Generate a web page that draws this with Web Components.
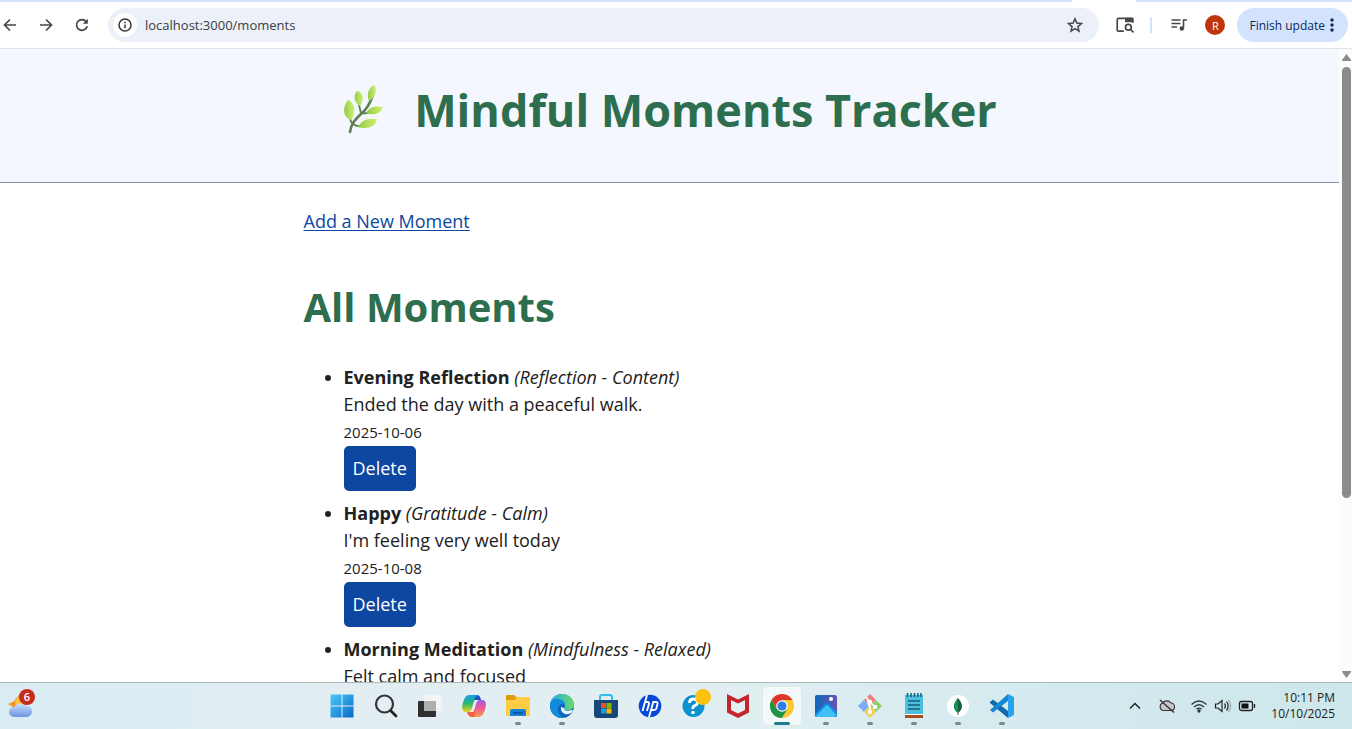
<!DOCTYPE html>
<html lang="en">
<head>
<meta charset="utf-8">
<meta name="viewport" content="width=device-width, initial-scale=1">
<title>Mindful Moments Tracker</title>
<style>
html, body { margin: 0; height: 100%; }
body { font-family: "Open Sans", "Noto Sans", sans-serif; color: #212121; overflow: hidden; }
</style>
</head>
<body>
<desktop-screen>
  <browser-toolbar slot="toolbar" url="localhost:3000/moments"></browser-toolbar>
  <moments-page slot="page"></moments-page>
  <task-bar slot="taskbar"></task-bar>
</desktop-screen>

<script>
const ICONS = {
  back: `<svg viewBox="0 0 16 16" fill="none" stroke="#474747" stroke-width="1.7"><path d="M14 8H3M8 2.5 2.5 8 8 13.5"/></svg>`,
  forward: `<svg viewBox="0 0 16 16" fill="none" stroke="#474747" stroke-width="1.7"><path d="M2 8h11M8 2.5 13.5 8 8 13.5"/></svg>`,
  reload: `<svg viewBox="0 0 16 16" fill="none" stroke="#474747" stroke-width="1.7"><path d="M13.2 9.2A5.4 5.4 0 1 1 12.2 4.6"/><path d="M13.8 1.8v5H8.8L13.8 1.8Z" fill="#474747" stroke="none"/></svg>`,
  info: `<svg viewBox="0 0 16 16" fill="none" stroke="#333" stroke-width="1.5"><circle cx="8" cy="8" r="6"/><path d="M8 7.4v3.8M8 4.7v1.5"/></svg>`,
  star: `<svg viewBox="0 0 18 18" fill="none" stroke="#474747" stroke-width="1.5"><path d="m9 2.8 1.8 4.3 4.7.4-3.6 3.1 1.1 4.6L9 12.7l-4 2.5 1.1-4.6-3.6-3.1 4.7-.4Z"/></svg>`,
  lens: `<svg viewBox="0 0 20 18" fill="none" stroke="#474747" stroke-width="1.5"><path d="M9 14.500H4q-1 0-1-1V4q0-1 1-1h12q1 0 1 1v3"/><path d="M10 2.500h7.500V6.500H10Z" fill="#474747" stroke="none"/><circle cx="13" cy="11" r="2.600"/><path d="m15 13 2.600 2.600"/></svg>`,
  media: `<svg viewBox="0 0 18 18" fill="none" stroke="#474747" stroke-width="1.6"><path d="M1.500 4h9M1.500 7.500h9M1.500 11h5.500"/><path d="M13.500 12.500V4h3.500"/><circle cx="11.800" cy="12.500" r="2.200" fill="#474747" stroke="none"/></svg>`,
  dots: `<svg viewBox="0 0 6 16" fill="#0b2a5c"><circle cx="3" cy="3" r="1.700"/><circle cx="3" cy="8" r="1.700"/><circle cx="3" cy="13" r="1.700"/></svg>`,
  herb: `<svg viewBox="0 0 44 50"><defs><linearGradient id="l" x1="0" x2="1"><stop stop-color="#8fca4b"/><stop offset=".6" stop-color="#b9e35f"/><stop offset="1" stop-color="#cdee7c"/></linearGradient></defs><g fill="none" stroke="#5d8052" stroke-linecap="round"><path d="M8 47C9 38 14 34 20 28 27 22 29 15 31 10" stroke-width="2.600"/><path d="M10 38Q8 36 8 32M19 28Q18 24 17 20M20 28Q27 29 31 26M11 39Q16 43 24 40" stroke-width="1.800"/></g><g fill="url(#l)"><path d="M6 15C10 16 14 23 12 27Q12 33 8 35C1 31 0 23 6 15Z"/><path d="M15 6C21 7 23 14 18 21 12 17 11 11 15 6Z"/><path d="M32 0C36 5 33 13 27 16 24 9 27 3 32 0Z"/><path d="M41 22C39 29 31 31 24 28 28 21 34 21 41 22Z"/><path d="M35 34C34 42 24 45 16 42 21 33 27 34 35 34Z"/></g></svg>`,
  weather: `<svg viewBox="0 0 26 26"><defs><linearGradient id="w" x2="0" y2="1"><stop stop-color="#c9ddfc"/><stop offset="1" stop-color="#6c95df"/></linearGradient></defs><path d="m12 1 2 5 6 1-3 7-9 3-3-3-5-3 5-2Z" fill="#f7941d"/><circle cx="12" cy="9" r="5" fill="#ffc33b"/><path d="M6 24a5 5 0 0 1 0-10 7 6 0 0 1 12-1 5.500 5.500 0 0 1 1 11Z" fill="url(#w)"/></svg>`,
  windows: `<svg viewBox="0 0 24 24"><defs><linearGradient id="g" x2="1" y2="1"><stop stop-color="#4ccbf9"/><stop offset="1" stop-color="#0469c9"/></linearGradient></defs><path fill="url(#g)" d="M.5.5h11v11H.5ZM12.500.5h11v11h-11ZM.5 12.500h11v11H.5ZM12.500 12.500h11v11h-11Z"/></svg>`,
  search: `<svg viewBox="0 0 24 24" fill="none"><circle cx="10.500" cy="10" r="8.500" stroke="#303438" stroke-width="2.200" fill="#e5eff2"/><path d="m17 17 5 5" stroke="#252525" stroke-width="2.800" stroke-linecap="round"/></svg>`,
  tasks: `<svg viewBox="0 0 24 24"><rect y="7" width="18" height="16" rx="1" fill="#303030"/><rect x="6" y="1" width="18" height="16" rx="1" fill="#f4f4f4"/><path d="M6 7h12v10H6Z" fill="#aeb0b0"/></svg>`,
  copilot: `<svg viewBox="0 0 24 24"><defs><linearGradient id="a" x2="0" y2="1"><stop stop-color="#149eea"/><stop offset=".5" stop-color="#29b96e"/><stop offset="1" stop-color="#f6d01c"/></linearGradient><linearGradient id="b" x2="0" y2="1"><stop stop-color="#a754e5"/><stop offset=".5" stop-color="#ee5e91"/><stop offset="1" stop-color="#fc9b4a"/></linearGradient></defs><path d="M12 1h3q3 0 4 5h-6l-3 3Z" fill="#2251c7"/><path d="M7 1h9q-3 1-4 6l-2 7q-1 4-4 4H4q-4 0-4-5Q2 1 7 1Z" fill="url(#a)"/><path d="M17 23H8q3-1 4-6l2-7q1-4 4-4h2q4 0 4 5-2 12-7 12Z" fill="url(#b)"/><path d="M12 23H9q-3-1-4-5h6l3-3Z" fill="#ef6046"/></svg>`,
  folder: `<svg viewBox="0 0 24 24"><path d="M0 2q0-1 1-1h7l2 2h13q1 0 1 1v17H0Z" fill="#dd9d06"/><path d="M0 6h9l2-3h12q1 0 1 1v18H0Z" fill="#ffcd43"/><path d="M4 22v-5q0-2 2-2h12q2 0 2 2v5Z" fill="#1780d6"/><path d="M7 18h10v2H7Z" fill="#0558a2"/></svg>`,
  edge: `<svg viewBox="0 0 24 24"><defs><linearGradient id="e" x2="1"><stop stop-color="#25a9ed"/><stop offset="1" stop-color="#69dc65"/></linearGradient></defs><circle cx="12" cy="12" r="12" fill="#0b67bd"/><path d="M0 11C1-3 23-4 24 11q0 5-6 5-4 0-4-2 2-2 0-5-5-6-14 2Z" fill="url(#e)"/><path d="M0 10q2-6 9-5 7 2 6 7-1-3-4-2-4 2-3 7 1 5 6 7Q0 24 0 10Z" fill="#128bdc"/><path d="M14 14q0 4 8 2l1 1q-3 4-8 3-5-2-4-7Z" fill="#e7f4f7"/></svg>`,
  store: `<svg viewBox="0 0 24 24"><path d="M6 7V3q0-2 2-2h8q2 0 2 2v4" fill="none" stroke="#32bdf2" stroke-width="2"/><path d="M0 6h24v15q0 3-3 3H3q-3 0-3-3Z" fill="#194779"/><path d="M7 9h5v5H7Z" fill="#f25022"/><path d="M12.500 9h5v5h-5Z" fill="#7fba00"/><path d="M7 14.500h5v5H7Z" fill="#00a4ef"/><path d="M12.500 14.500h5v5h-5Z" fill="#ffb900"/></svg>`,
  hp: `<svg viewBox="0 0 24 24"><circle cx="12" cy="12" r="11.300" fill="#0648d8"/><g fill="none" stroke="#fff" stroke-width="1.900"><path d="M9 1 4.500 17M7 8h2.500q2 0 1.400 2L9 17M11 23l4.300-15H18q2 0 1.500 2l-1.200 4.500Q17.800 16 16 16h-3"/></g></svg>`,
  help: `<svg viewBox="0 0 28 28"><circle cx="13.500" cy="14" r="11" fill="#0b92d1"/><path d="M9.500 11q0-4 4-4t4 3.500q0 2-2.500 3T13 17" fill="none" stroke="#fff" stroke-width="2.800"/><circle cx="13" cy="20.500" r="1.800" fill="#fff"/><circle cx="23" cy="5" r="8" fill="#ffc20e"/></svg>`,
  mcafee: `<svg viewBox="0 0 24 24"><path d="m1 0 11 5.500L23 0v18.500L12 24 1 18.500Z" fill="#c6252c"/><path d="m5 6 7 3.500L19 6v10l-7 3.500L5 16Z" fill="#e4f0f3"/></svg>`,
  chrome: `<svg viewBox="0 0 24 24"><circle cx="12" cy="12" r="12" fill="#fdc82f"/><path d="M1.600 6A12 12 0 0 1 22.400 6H12L7 15Z" fill="#dc382c"/><path d="M1.600 6A12 12 0 0 0 12 24l5.200-9H6.800Z" fill="#209348"/><circle cx="12" cy="12" r="5.800" fill="#fff"/><circle cx="12" cy="12" r="4.600" fill="#2f7de9"/></svg>`,
  photos: `<svg viewBox="0 0 24 24"><defs><linearGradient id="p" x2="1"><stop stop-color="#0c67bc"/><stop offset="1" stop-color="#6556b4"/></linearGradient></defs><rect x="1" y="1" width="22" height="22" rx="2" fill="url(#p)"/><path d="M1 20 11.500 9.500q1.500-1 3 0L23 18v3q0 2-2 2H3q-2 0-2-2Z" fill="#1687df"/><path d="m2 22 9.500-10q1.500-1 3 0l7.500 8.500Q22 23 20 23H3Z" fill="#40bff5"/><circle cx="17" cy="5" r="2" fill="#fff"/></svg>`,
  git: `<svg viewBox="0 0 24 24"><path d="m12 0 6 6-6 6-6-6Z" fill="#f28080"/><path d="m6 6 6 6-6 6-6-6Z" fill="#79aff8"/><path d="m18 6 6 6-6 6-6-6Z" fill="#8bd165"/><path d="m12 12 6 6-6 6-6-6Z" fill="#f5ce4d"/><g fill="#fff" stroke="#fff" stroke-width="1.500"><path d="m8 3 4 5v10M12 8l5 5"/><circle cx="12" cy="8" r="1.500"/><circle cx="12" cy="18" r="1.500"/><circle cx="17" cy="13" r="1.500"/></g></svg>`,
  notes: `<svg viewBox="0 0 24 26"><path d="M3 2h18v20H3Z" fill="#4cbfdd"/><path d="M3 22h18v3H3Z" fill="#a84d17"/><path d="M3 21h18v1H3Z" fill="#fff"/><path d="M5.500 0v4M9 0v4M12.500 0v4M16 0v4M19 0v4M6 8h12M6 12h12M6 16h12" stroke="#135d79" stroke-width="1.500"/></svg>`,
  mongo: `<svg viewBox="0 0 24 24"><circle cx="12" cy="12" r="11" fill="#fff"/><path d="M12 4q8 9 0 15-8-6 0-15Z" fill="#116149"/><path d="M12 4q-8 9 0 15Z" fill="#159451"/><path d="M12 17v4" stroke="#5e746b" stroke-width="1"/></svg>`,
  vscode: `<svg viewBox="0 0 24 24"><path d="m0 8 3-2.500L18 17v7L0 9Z" fill="#1269ad"/><path d="M0 16 18 0v7L3 18.500 0 16Z" fill="#1688cf"/><path d="m18 0 6 3v18l-6 3Z" fill="#28a2ed"/></svg>`,
  chevron: `<svg viewBox="0 0 16 16" fill="none" stroke="#222" stroke-width="1.500"><path d="m3 10.500 5-5 5 5"/></svg>`,
  cloudoff: `<svg viewBox="0 0 18 16" fill="#c8c8c8" stroke="#333" stroke-width="1.100"><path d="M5 12.500a4 4 0 0 1-.5-7.500 5 4.500 0 0 1 8.500 0 3.800 3.800 0 0 1 .5 7.500Z"/><path d="m2 2 14 12.500" stroke-width="1.500"/></svg>`,
  wifi: `<svg viewBox="0 0 18 16" fill="none" stroke="#26383c" stroke-width="1.300"><path d="M1.500 6.500q7.500-7 15 0M4 9q5-4.600 10 0M6.400 11.300q2.600-2.300 5.200 0"/><circle cx="9" cy="13" r="1" fill="#222"/></svg>`,
  sound: `<svg viewBox="0 0 18 16" fill="none" stroke="#222" stroke-width="1.200"><path d="M1.500 6h2.500l4-3.500v11L4 10H1.500ZM10.500 5.500q1.800 2.500 0 5M12.500 3.500q3.200 4.500 0 9"/><path d="M14.500 2q4.200 6 0 12" stroke="#91a8ab"/></svg>`,
  battery: `<svg viewBox="0 0 18 16" fill="none" stroke="#222" stroke-width="1.300"><rect x="1.500" y="3.500" width="13" height="9" rx="2"/><path d="M3.500 5.500h7v5h-7Z" fill="#111" stroke="none"/><path d="M16.500 6v4"/></svg>`
};

class UiIcon extends HTMLElement {
  connectedCallback() {
    if (this.shadowRoot) return;
    this.attachShadow({ mode: 'open' }).innerHTML = `<style>
      :host { display: block; flex: none; width: var(--w, 16px); height: var(--h, var(--w, 16px)); }
      svg { display: block; width: 100%; height: 100%; overflow: visible; }
    </style>${ICONS[this.getAttribute('name')]}`;
    this.shadowRoot.querySelector('svg').setAttribute('aria-hidden', 'true');
  }
}
customElements.define('ui-icon', UiIcon);

class DesktopScreen extends HTMLElement {
  constructor() {
    super();
    this.attachShadow({ mode: 'open' }).innerHTML = `<style>
      :host { display: flex; flex-direction: column; height: 100vh; background: #fff; }
      .view { flex: 1; min-height: 0; display: flex; }
      .page { flex: 1; min-width: 0; overflow: hidden; }
    </style>
    <slot name="toolbar"></slot>
    <div class="view"><main class="page"><slot name="page"></slot></main><scroll-rail></scroll-rail></div>
    <slot name="taskbar"></slot>`;
  }
}
customElements.define('desktop-screen', DesktopScreen);

class ScrollRail extends HTMLElement {
  constructor() {
    super();
    this.attachShadow({ mode: 'open' }).innerHTML = `<style>
      :host { display: flex; flex-direction: column; box-sizing: border-box; width: 13px; padding: 5px 1px 4px 3px; gap: 5px; background: #fcfcfc; }
      svg { display: block; width: 9px; height: 8px; fill: #8b8b8b; flex: none; }
      .track { flex: 1; }
      .thumb { height: 72%; border-radius: 5px; background: #8b8b8b; }
    </style>
    <svg viewBox="0 0 9 8"><path d="M4.500 0 9 6v1H0V6Z"/></svg>
    <div class="track"><div class="thumb"></div></div>
    <svg viewBox="0 0 9 8"><path d="M0 1h9v1L4.500 8 0 2Z"/></svg>`;
  }
}
customElements.define('scroll-rail', ScrollRail);

class BrowserToolbar extends HTMLElement {
  connectedCallback() {
    if (this.shadowRoot) return;
    this.attachShadow({ mode: 'open' }).innerHTML = `<style>
      :host { display: block; flex: none; background: #fff; border-bottom: 1px solid #dfe5e1; }
      .strip { height: 2px; display: flex; justify-content: space-between; }
      .strip i { background: #d3e3fd; width: 216px; }
      .strip i:first-child { width: auto; flex: 1; margin-right: 64px; border-bottom-right-radius: 2px; }
      .row { display: flex; align-items: center; height: 46px; padding-right: 4px; }
      button { border: 0; padding: 0; background: none; font: inherit; color: inherit; display: flex; align-items: center; justify-content: center; }
      .nav { width: 36px; height: 34px; }
      .nav:first-child { width: 28px; padding-right: 8px; }
      .bar { flex: 1; display: flex; align-items: center; height: 34px; margin-left: 8px; margin-right: 14px; padding: 0 15px 0 5px; border-radius: 17px; background: #ecf0f9; }
      .info { width: 24px; height: 24px; border-radius: 50%; background: #fff; }
      input { flex: 1; min-width: 0; border: 0; padding: 0; margin-left: 8px; background: none; font: inherit; font-size: 13px; color: #3a3d42; outline: 0; }
      .sep { width: 2px; height: 16px; background: #d3e3fd; margin: 0 18px 0 13px; }
      .me { width: 20px; height: 20px; border-radius: 50%; background: #bf360c; color: #fff; font-size: 11px; margin: 0 12px 0 17px; }
      .update { height: 34px; padding: 0 13px 0 12px; gap: 4px; border-radius: 17px; background: #d3e3fd; color: #0b2a5c; font-size: 12px; }
    </style>
    <div class="strip"><i></i><i></i></div>
    <div class="row">
      <button class="nav" aria-label="Back"><ui-icon name="back"></ui-icon></button>
      <button class="nav" aria-label="Forward"><ui-icon name="forward"></ui-icon></button>
      <button class="nav" aria-label="Reload"><ui-icon name="reload"></ui-icon></button>
      <div class="bar">
        <button class="info" aria-label="Site information"><ui-icon name="info"></ui-icon></button>
        <input type="text" aria-label="Address" value="${this.getAttribute('url')}">
        <button aria-label="Bookmark"><ui-icon name="star" style="--w:18px"></ui-icon></button>
      </div>
      <button aria-label="Search tabs"><ui-icon name="lens" style="--w:24px;--h:20px"></ui-icon></button>
      <span class="sep"></span>
      <button aria-label="Media"><ui-icon name="media" style="--w:18px"></ui-icon></button>
      <button class="me">R</button>
      <button class="update">Finish update<ui-icon name="dots" style="--w:6px;--h:16px"></ui-icon></button>
    </div>`;
  }
}
customElements.define('browser-toolbar', BrowserToolbar);

class MomentItem extends HTMLElement {
  constructor() {
    super();
    this.attachShadow({ mode: 'open' }).innerHTML = `<style>
      :host { display: block; padding-bottom: 9px; }
      :host([collapsed]) .details { display: none; }
      .date { font-size: 15px; padding-top: 1px; line-height: 27px; }
      button { display: block; height: 45px; padding: 0 9px; border: 0; border-radius: 5px; background: #0d47a1; color: #fff; font: inherit; font-size: 18px; }
    </style>
    <div><strong><slot name="title"></slot></strong> <em><slot name="kind"></slot></em></div>
    <div><slot></slot></div>
    <div class="details">
      <div class="date"><slot name="date"></slot></div>
      <button type="button">Delete</button>
    </div>`;
  }
}
customElements.define('moment-item', MomentItem);

class MomentsPage extends HTMLElement {
  constructor() {
    super();
    const moments = [
      ['Evening Reflection', '(Reflection - Content)', 'Ended the day with a peaceful walk.', '2025-10-06'],
      ['Happy', '(Gratitude - Calm)', "I'm feeling very well today", '2025-10-08'],
      ['Morning Meditation', '(Mindfulness - Relaxed)', 'Felt calm and focused', '']
    ];
    this.attachShadow({ mode: 'open' }).innerHTML = `<style>
      :host { display: block; font-size: 18px; line-height: 27px; }
      header { display: flex; justify-content: center; gap: 28px; padding: 33px 0 44px; background: #f5f7ff; border-bottom: 1px solid #898ea4; }
      h1, h2 { margin: 0; color: #2d6e4f; font-weight: 700; }
      h1 { font-size: 45px; line-height: 56px; }
      h2 { font-size: 40px; line-height: 48px; margin: 48px 0 33px; }
      .body { width: 90%; max-width: 732px; margin: 0 auto; padding-top: 25px; }
      a { color: #0d47a1; text-decoration: underline; text-underline-offset: 2px; }
      ul { margin: 0; padding-left: 40px; }
    </style>
    <header><ui-icon name="herb" style="--w:44px;--h:56px"></ui-icon><h1>Mindful Moments Tracker</h1></header>
    <div class="body">
      <a href="/moments/new">Add a New Moment</a>
      <h2>All Moments</h2>
      <ul>${moments.map(([t, k, d, w]) => `<li><moment-item${w ? '' : ' collapsed'}><span slot="title">${t}</span><span slot="kind">${k}</span>${d}<span slot="date">${w}</span></moment-item></li>`).join('')}</ul>
    </div>`;
  }
}
customElements.define('moments-page', MomentsPage);

class TaskApp extends HTMLElement {
  connectedCallback() {
    if (this.shadowRoot) return;
    const name = this.getAttribute('name');
    this.attachShadow({ mode: 'open' }).innerHTML = `<style>
      :host { display: block; }
      button { display: grid; grid-template-rows: 1fr 3px; justify-items: center; align-items: center; box-sizing: border-box; width: 40px; height: 40px; padding: 2px 0 0; border: 1px solid transparent; border-radius: 4px; background: none; }
      i { width: 6px; height: 3px; border-radius: 2px; }
      :host([running]) i { background: #7d8688; }
      :host([active]) button { background: #f3f8f9; border-color: #e0e9eb; }
      :host([active]) i { width: 16px; background: #1b7f91; }
      ui-icon { --w: 24px; }
      ui-icon[name="help"] { --w: 28px; }
      ui-icon[name="notes"] { --h: 26px; }
    </style><button aria-label="${name}"><ui-icon name="${name}"></ui-icon><i></i></button>`;
  }
}
customElements.define('task-app', TaskApp);

class TaskBar extends HTMLElement {
  constructor() {
    super();
    const apps = ['windows', 'search', 'tasks', 'copilot', 'folder*', 'edge*', 'store', 'hp', 'help', 'mcafee', 'chrome!', 'photos*', 'git*', 'notes*', 'mongo*', 'vscode*'];
    this.attachShadow({ mode: 'open' }).innerHTML = `<style>
      :host { display: grid; grid-template-columns: 1fr auto 1fr; align-items: center; flex: none; box-sizing: border-box; height: 47px; padding-right: 9px; border-top: 1px solid #a9b8bc; background: linear-gradient(90deg, #d9ecf4, #e2eef2 25%, #e2eff2 50%, #d3eaee 80%, #cde7eb); }
      .weather { position: relative; display: flex; align-items: center; width: 28px; height: 30px; margin-left: 8px; padding: 0; border: 0; background: none; }
      .weather b { position: absolute; top: -2px; right: 1px; width: 16px; height: 16px; border-radius: 50%; background: #c42b1c; color: #fff; font: 600 11px/16px "Open Sans", sans-serif; }
      nav { display: flex; gap: 4px; }
      .tray { display: flex; align-items: center; justify-content: flex-end; gap: 6px; padding-right: 8px; }
      .tray ui-icon { --w: 18px; --h: 16px; }
      .clock { font-size: 12px; line-height: 16px; text-align: right; color: #1b1b1b; margin-left: 9px; }
      .cloud { margin: 0 8px; }
    </style>
    <button class="weather" aria-label="Weather"><ui-icon name="weather" style="--w:26px"></ui-icon><b>6</b></button>
    <nav>${apps.map(a => `<task-app name="${a.replace(/\W/, '')}"${/\W/.test(a) ? ' running' : ''}${a.endsWith('!') ? ' active' : ''}></task-app>`).join('')}</nav>
    <div class="tray">
      <ui-icon name="chevron"></ui-icon><ui-icon class="cloud" name="cloudoff"></ui-icon><ui-icon name="wifi"></ui-icon><ui-icon name="sound"></ui-icon><ui-icon name="battery"></ui-icon>
      <div class="clock">10:11 PM<br>10/10/2025</div>
    </div>`;
  }
}
customElements.define('task-bar', TaskBar);
</script>
</body>
</html>
